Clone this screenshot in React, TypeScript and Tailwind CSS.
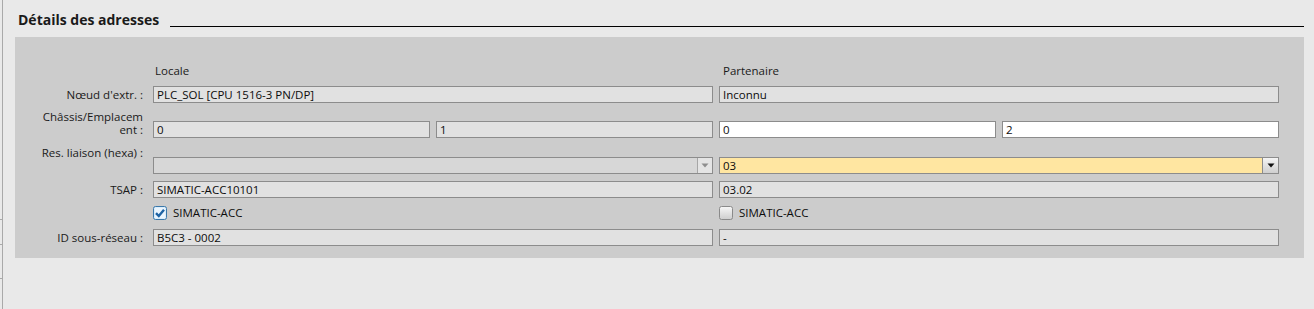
import React from 'react';

const font = { fontFamily: '"Open Sans", "Noto Sans", sans-serif' };

function Field({ value = '', tone = 'ro' }: { value?: string; tone?: 'ro' | 'white' }) {
    return (
        <div
            className={`h-[17px] border border-[#8c8c8c] px-[3px] flex items-center text-[11.5px] text-[#0c0c0c] leading-none overflow-hidden whitespace-nowrap ${
                tone === 'white' ? 'bg-white' : 'bg-[#e1e1e1]'
            }`}
        >
            {value}
        </div>
    );
}

function Combo({ value = '', active = false }: { value?: string; active?: boolean }) {
    return (
        <div
            className={`h-[17px] border border-[#8c8c8c] flex items-stretch text-[11.5px] text-[#0c0c0c] leading-none ${
                active ? 'bg-[#ffe6a1]' : 'bg-[#d7d7d7]'
            }`}
        >
            <div className="flex-1 flex items-center px-[3px]">{value}</div>
            {active ? (
                <div className="w-[16px] border-l border-[#8c8c8c] bg-gradient-to-b from-[#f4f4f4] to-[#cfcfcf] flex items-center justify-center">
                    <svg width="8" height="5" viewBox="0 0 8 5">
                        <path d="M0.5 0.5 H7.5 L4 4.5 Z" fill="#111" />
                    </svg>
                </div>
            ) : (
                <div className="w-[15px] border-l border-[#a6a6a6] bg-[#e4e4e4] flex items-center justify-center">
                    <svg width="8" height="5" viewBox="0 0 8 5">
                        <path d="M0.5 0.5 H7.5 L4 4.5 Z" fill="#8e8e8e" />
                    </svg>
                </div>
            )}
        </div>
    );
}

function Check({ checked, label }: { checked: boolean; label: string }) {
    return (
        <div className="h-[17px] flex items-center gap-[6px] text-[11.5px] text-[#0c0c0c]">
            {checked ? (
                <svg width="14" height="14" viewBox="0 0 14 14">
                    <rect x="0.5" y="0.5" width="13" height="13" rx="2" fill="#d9ecfb" stroke="#3a78aa" />
                    <rect x="2" y="2" width="10" height="10" rx="1" fill="#eaf5fe" />
                    <path d="M3 7.2 L5.8 10 L11 3.8" fill="none" stroke="#1e63a4" strokeWidth="2.4" />
                </svg>
            ) : (
                <svg width="14" height="14" viewBox="0 0 14 14">
                    <defs>
                        <linearGradient id="cbg" x1="0" y1="0" x2="0" y2="1">
                            <stop offset="0" stopColor="#f7f7f7" />
                            <stop offset="1" stopColor="#cdcdcd" />
                        </linearGradient>
                    </defs>
                    <rect x="0.5" y="0.5" width="13" height="13" rx="2" fill="url(#cbg)" stroke="#8a8a8a" />
                </svg>
            )}
            <span>{label}</span>
        </div>
    );
}

function Label({ lines }: { lines: string[] }) {
    return (
        <div className="pr-[4px] flex flex-col items-end text-[11.5px] leading-[13px] text-[#1a1a1a] whitespace-nowrap">
            {lines.map((l, i) => (
                <span key={i}>{l || '\u00a0'}</span>
            ))}
        </div>
    );
}

export default function App() {
    return (
        <div className="h-[309px] w-[1314px] bg-[#e9e9e9] flex" style={font}>
            <div className="w-[3px] border-r border-[#a9a9a9] relative">
                <div className="absolute left-0 top-[219px] w-[2px] h-px bg-[#a9a9a9]" />
                <div className="absolute left-0 top-[244px] w-[2px] h-px bg-[#a9a9a9]" />
                <div className="absolute left-0 top-[278px] w-[2px] h-px bg-[#a9a9a9]" />
            </div>

            <div className="flex-1 pl-[12px] pr-[10px]">
                <div className="h-[37px] flex items-end pb-[10px] pl-[3px]">
                    <span className="text-[14px] font-bold text-[#1a1a1a] leading-none">Détails des adresses</span>
                    <div className="flex-1 ml-[11px] border-b border-black" />
                </div>

                <div className="bg-[#cccccc] pt-[25px] pb-[12px] pr-[25px]">
                    <div className="grid grid-cols-[132px_560px_560px] gap-x-[6px] h-[16px] items-center text-[11.5px] text-[#1a1a1a]">
                        <div />
                        <div className="pl-[2px]">Locale</div>
                        <div className="pl-[4px]">Partenaire</div>
                    </div>

                    <div className="mt-[8px] grid grid-cols-[132px_560px_560px] gap-x-[6px] items-center">
                        <Label lines={["Nœud d'extr. :"]} />
                        <Field value="PLC_SOL [CPU 1516-3 PN/DP]" />
                        <Field value="Inconnu" />
                    </div>

                    <div className="mt-[7px] h-[28px] grid grid-cols-[132px_560px_560px] gap-x-[6px]">
                        <Label lines={['Châssis/Emplacem', 'ent :']} />
                        <div className="self-end grid grid-cols-2 gap-x-[6px]">
                            <Field value="0" />
                            <Field value="1" />
                        </div>
                        <div className="self-end grid grid-cols-2 gap-x-[6px]">
                            <Field value="0" tone="white" />
                            <Field value="2" tone="white" />
                        </div>
                    </div>

                    <div className="mt-[8px] h-[28px] grid grid-cols-[132px_560px_560px] gap-x-[6px]">
                        <Label lines={['Res. liaison (hexa) :', '']} />
                        <div className="self-end">
                            <Combo />
                        </div>
                        <div className="self-end">
                            <Combo value="03" active />
                        </div>
                    </div>

                    <div className="mt-[7px] grid grid-cols-[132px_560px_560px] gap-x-[6px] items-center">
                        <Label lines={['TSAP :']} />
                        <Field value="SIMATIC-ACC10101" />
                        <Field value="03.02" />
                    </div>

                    <div className="mt-[6px] grid grid-cols-[132px_560px_560px] gap-x-[6px] items-center">
                        <div />
                        <Check checked label="SIMATIC-ACC" />
                        <Check checked={false} label="SIMATIC-ACC" />
                    </div>

                    <div className="mt-[8px] grid grid-cols-[132px_560px_560px] gap-x-[6px] items-center">
                        <Label lines={['ID sous-réseau :']} />
                        <Field value="B5C3 - 0002" />
                        <Field value="-" />
                    </div>
                </div>
            </div>
        </div>
    );
}
